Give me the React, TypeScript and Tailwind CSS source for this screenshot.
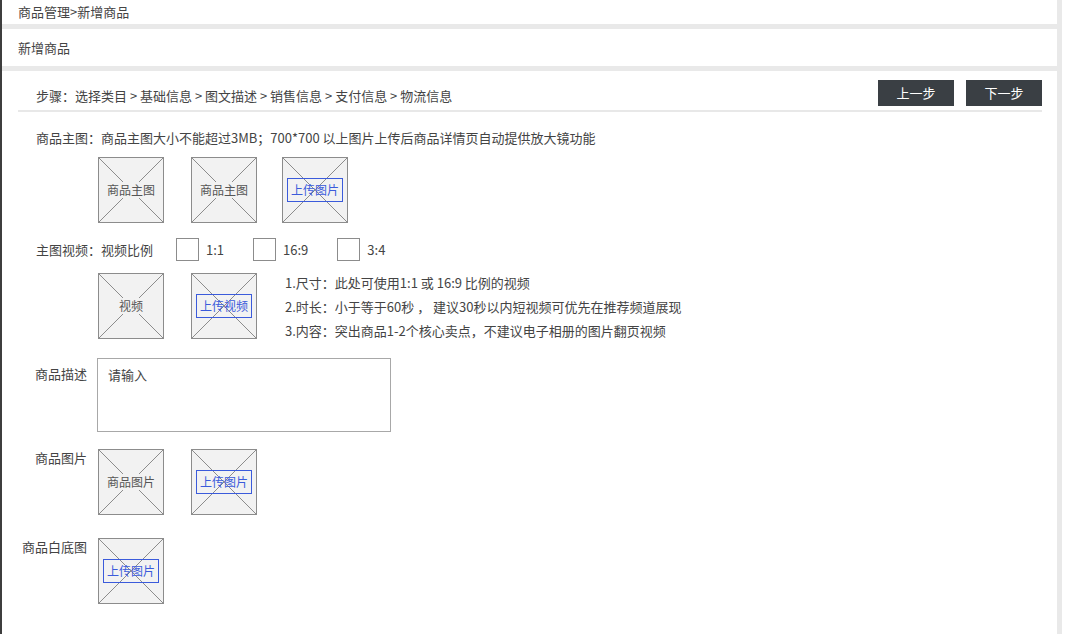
import React from 'react';

const font = { fontFamily: '"Noto Sans CJK SC", "Microsoft YaHei", sans-serif' };

function PicBox({ label, upload }: { label: string; upload?: boolean }) {
  return (
    <div className="relative w-[66px] h-[66px] border border-[#8c8c8c] bg-[#f2f2f2] flex items-center justify-center shrink-0">
      <svg className="absolute inset-0 w-full h-full" viewBox="0 0 64 64" preserveAspectRatio="none">
        <line x1="0" y1="0" x2="64" y2="64" stroke="#8c8c8c" strokeWidth="1" />
        <line x1="64" y1="0" x2="0" y2="64" stroke="#8c8c8c" strokeWidth="1" />
      </svg>
      {upload ? (
        <span className="relative w-[56px] h-[24px] border border-[#3b5bdb] text-[#3b5bdb] text-[12px] leading-[22px] text-center">
          {label}
        </span>
      ) : (
        <span className="relative text-[12px] leading-[16px] text-[#555] bg-[#f2f2f2]">{label}</span>
      )}
    </div>
  );
}

function CheckOpt({ text }: { text: string }) {
  return (
    <div className="flex items-center">
      <span className="w-[23px] h-[23px] border border-[#8c8c8c] bg-white" />
      <span className="ml-[7px]">{text}</span>
    </div>
  );
}

export default function App() {
  return (
    <div className="w-[1080px] h-[634px] bg-white overflow-hidden text-[13px] text-[#444]" style={font}>
      <div className="w-[1062px] h-full border-l-2 border-l-[#3d3d3d] border-r-[5px] border-r-[#e9e9e9] bg-[#e9e9e9] flex flex-col gap-[5px]">
        <div className="h-[24px] bg-white px-[16px] flex items-center">商品管理&gt;新增商品</div>
        <div className="h-[37px] bg-white px-[16px] flex items-center">新增商品</div>
        <div className="flex-1 bg-white">
          {/* steps */}
          <div className="ml-[16px] mr-[15px] pt-[9px] pb-[4px] border-b-2 border-[#e8e8e8] flex items-center justify-between">
            <span className="pl-[18px] pt-[6px] leading-[16px]">
              步骤：选择类目 &gt; 基础信息 &gt; 图文描述 &gt; 销售信息 &gt; 支付信息 &gt; 物流信息
            </span>
            <div className="flex gap-[12px]">
              <button className="w-[76px] h-[26px] bg-[#3a3f44] text-white text-[13px]">上一步</button>
              <button className="w-[76px] h-[26px] bg-[#3a3f44] text-white text-[13px]">下一步</button>
            </div>
          </div>

          {/* main image */}
          <div className="mt-[18px] pl-[34px] leading-[16px]">
            商品主图：商品主图大小不能超过3MB；700*700 以上图片上传后商品详情页自动提供放大镜功能
          </div>
          <div className="mt-[11px] pl-[96px] flex">
            <PicBox label="商品主图" />
            <div className="ml-[27px]">
              <PicBox label="商品主图" />
            </div>
            <div className="ml-[25px]">
              <PicBox label="上传图片" upload />
            </div>
          </div>

          {/* video */}
          <div className="mt-[15px] pl-[34px] h-[23px] flex items-center">
            <span>主图视频：视频比例</span>
            <div className="ml-[23px] flex items-center gap-[29px]">
              <CheckOpt text="1:1" />
              <CheckOpt text="16:9" />
              <CheckOpt text="3:4" />
            </div>
          </div>
          <div className="mt-[12px] pl-[96px] flex">
            <PicBox label="视频" />
            <div className="ml-[27px]">
              <PicBox label="上传视频" upload />
            </div>
            <div className="ml-[28px] -mt-[2px] leading-[24px]">
              <div>1.尺寸：此处可使用1:1 或 16:9 比例的视频</div>
              <div>2.时长：小于等于60秒 ， 建议30秒以内短视频可优先在推荐频道展现</div>
              <div>3.内容：突出商品1-2个核心卖点，不建议电子相册的图片翻页视频</div>
            </div>
          </div>

          {/* description */}
          <div className="mt-[15px] flex">
            <div className="w-[85px] text-right pt-[8px] leading-[16px]">商品描述</div>
            <div className="ml-[10px] w-[294px] h-[74px] border border-[#a8a8a8] px-[10px] pt-[8px] leading-[16px]">
              请输入
            </div>
          </div>

          {/* product images */}
          <div className="mt-[17px] flex">
            <div className="w-[85px] text-right pt-[1px] leading-[16px]">商品图片</div>
            <div className="ml-[11px] flex">
              <PicBox label="商品图片" />
              <div className="ml-[27px]">
                <PicBox label="上传图片" upload />
              </div>
            </div>
          </div>

          {/* white background */}
          <div className="mt-[23px] flex">
            <div className="w-[85px] text-right pt-[1px] leading-[16px]">商品白底图</div>
            <div className="ml-[11px] flex">
              <PicBox label="上传图片" upload />
            </div>
          </div>
        </div>
      </div>
    </div>
  );
}
